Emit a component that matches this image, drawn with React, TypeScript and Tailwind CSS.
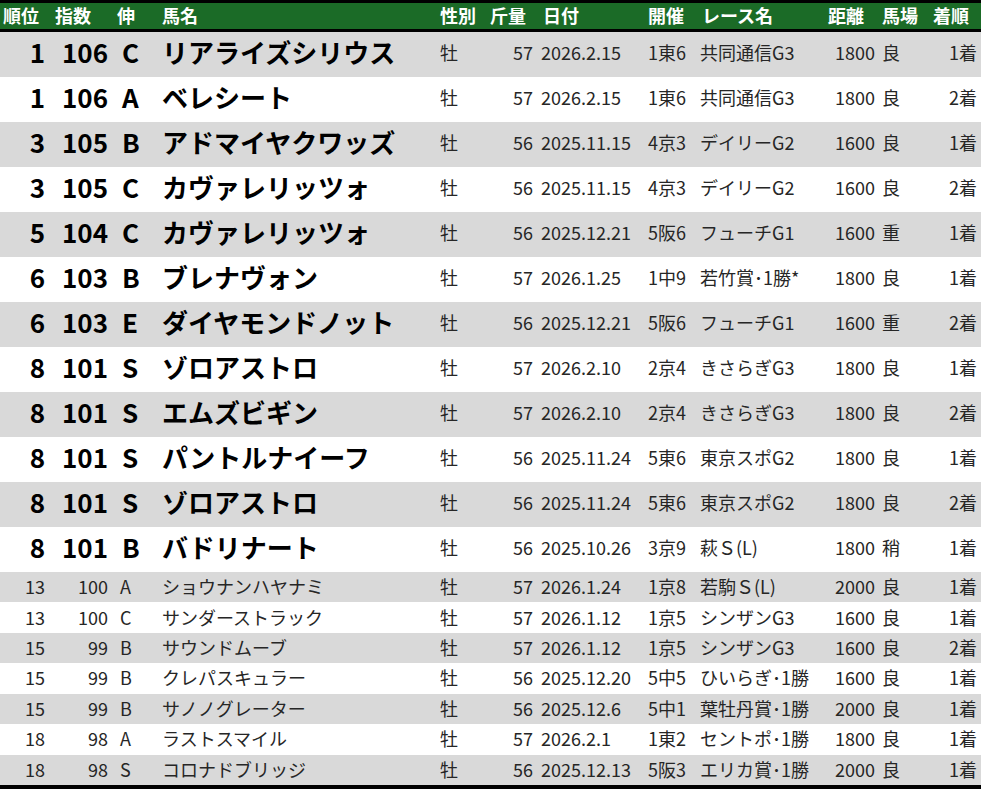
import React from "react";

type Row = [string, string, string, string, string, string, string, string, string, string, string, string];

const rows: Row[] = [
  ["1", "106", "C", "リアライズシリウス", "牡", "57", "2026.2.15", "1東6", "共同通信G3", "1800", "良", "1着"],
  ["1", "106", "A", "ベレシート", "牡", "57", "2026.2.15", "1東6", "共同通信G3", "1800", "良", "2着"],
  ["3", "105", "B", "アドマイヤクワッズ", "牡", "56", "2025.11.15", "4京3", "デイリーG2", "1600", "良", "1着"],
  ["3", "105", "C", "カヴァレリッツォ", "牡", "56", "2025.11.15", "4京3", "デイリーG2", "1600", "良", "2着"],
  ["5", "104", "C", "カヴァレリッツォ", "牡", "56", "2025.12.21", "5阪6", "フューチG1", "1600", "重", "1着"],
  ["6", "103", "B", "ブレナヴォン", "牡", "57", "2026.1.25", "1中9", "若竹賞･1勝*", "1800", "良", "1着"],
  ["6", "103", "E", "ダイヤモンドノット", "牡", "56", "2025.12.21", "5阪6", "フューチG1", "1600", "重", "2着"],
  ["8", "101", "S", "ゾロアストロ", "牡", "57", "2026.2.10", "2京4", "きさらぎG3", "1800", "良", "1着"],
  ["8", "101", "S", "エムズビギン", "牡", "57", "2026.2.10", "2京4", "きさらぎG3", "1800", "良", "2着"],
  ["8", "101", "S", "パントルナイーフ", "牡", "56", "2025.11.24", "5東6", "東京スポG2", "1800", "良", "1着"],
  ["8", "101", "S", "ゾロアストロ", "牡", "56", "2025.11.24", "5東6", "東京スポG2", "1800", "良", "2着"],
  ["8", "101", "B", "バドリナート", "牡", "56", "2025.10.26", "3京9", "萩Ｓ(L)", "1800", "稍", "1着"],
  ["13", "100", "A", "ショウナンハヤナミ", "牡", "57", "2026.1.24", "1京8", "若駒Ｓ(L)", "2000", "良", "1着"],
  ["13", "100", "C", "サンダーストラック", "牡", "57", "2026.1.12", "1京5", "シンザンG3", "1600", "良", "1着"],
  ["15", "99", "B", "サウンドムーブ", "牡", "57", "2026.1.12", "1京5", "シンザンG3", "1600", "良", "2着"],
  ["15", "99", "B", "クレパスキュラー", "牡", "56", "2025.12.20", "5中5", "ひいらぎ･1勝", "1600", "良", "1着"],
  ["15", "99", "B", "サノノグレーター", "牡", "56", "2025.12.6", "5中1", "葉牡丹賞･1勝", "2000", "良", "1着"],
  ["18", "98", "A", "ラストスマイル", "牡", "57", "2026.2.1", "1東2", "セントポ･1勝", "1800", "良", "1着"],
  ["18", "98", "S", "コロナドブリッジ", "牡", "56", "2025.12.13", "5阪3", "エリカ賞･1勝", "2000", "良", "1着"],
];

const cols = "grid grid-cols-[48px_62px_50px_278px_50px_50px_107px_53px_128px_52px_52px_51px]";

const headers: [string, string][] = [
  ["順位", "pl-[3px]"],
  ["指数", "pl-[7px]"],
  ["伸", "pl-[7px]"],
  ["馬名", "pl-[2px]"],
  ["性別", "pl-[2px]"],
  ["斤量", "pl-[2px]"],
  ["日付", "pl-[5px]"],
  ["開催", "pl-[3px]"],
  ["レース名", "pl-[4px]"],
  ["距離", "pl-[2px]"],
  ["馬場", "pl-[4px]"],
  ["着順", "pl-[3px]"],
];

function cn(...parts: string[]) {
  return parts.filter(Boolean).join(" ");
}

function TableRow({ row, index }: { row: Row; index: number }) {
  // top 12 rows are the big bold ones
  const big = index < 12;
  const bg = index % 2 === 0 ? "bg-[#d9d9d9]" : "bg-white";
  const lead = big
    ? "text-[26px] font-bold text-black"
    : "text-[18px] text-[#262626]";
  const rest = "text-[18px] text-[#262626]";
  return (
    <div
      className={cn(
        cols,
        bg,
        big ? "h-[45px] pb-[5px]" : "h-[30.43px] pb-[2px]",
        "items-center leading-none"
      )}
    >
      <div className={cn(lead, "text-right pr-[3px]")}>{row[0]}</div>
      <div className={cn(lead, "text-right pr-[2px]")}>{row[1]}</div>
      <div className={cn(lead, big ? "pl-[12px]" : "pl-[10px]")}>{row[2]}</div>
      <div className={cn(lead, "pl-[2px] whitespace-nowrap")}>{row[3]}</div>
      <div className={cn(rest, "pl-[2px]")}>{row[4]}</div>
      <div className={cn(rest, "text-right pr-[5px]")}>{row[5]}</div>
      <div className={cn(rest, "pl-[3px]")}>{row[6]}</div>
      <div className={cn(rest, "pl-[3px]")}>{row[7]}</div>
      <div className={cn(rest, "pl-[2px] whitespace-nowrap")}>{row[8]}</div>
      <div className={cn(rest, "text-right pr-[3px]")}>{row[9]}</div>
      <div className={cn(rest, "pl-[4px]")}>{row[10]}</div>
      <div className={cn(rest, "text-right pr-[4px]")}>{row[11]}</div>
    </div>
  );
}

export default function App() {
  return (
    <div
      className="w-[981px] h-[789px] bg-white overflow-hidden"
      style={{ fontFamily: '"Noto Sans CJK JP", "Noto Sans", sans-serif' }}
    >
      <div className="border-t-[3px] border-b-[4px] border-black">
        <div className={cn(cols, "h-[24px] pb-[2px] bg-[#1b6b27] items-center border-b-[3px] border-black box-content")}>
          {headers.map(([label, pad]) => (
            <div key={label} className={cn("text-[18px] font-bold text-white leading-none whitespace-nowrap", pad)}>
              {label}
            </div>
          ))}
        </div>
        {rows.map((row, i) => (
          <TableRow key={i} row={row} index={i} />
        ))}
      </div>
    </div>
  );
}
